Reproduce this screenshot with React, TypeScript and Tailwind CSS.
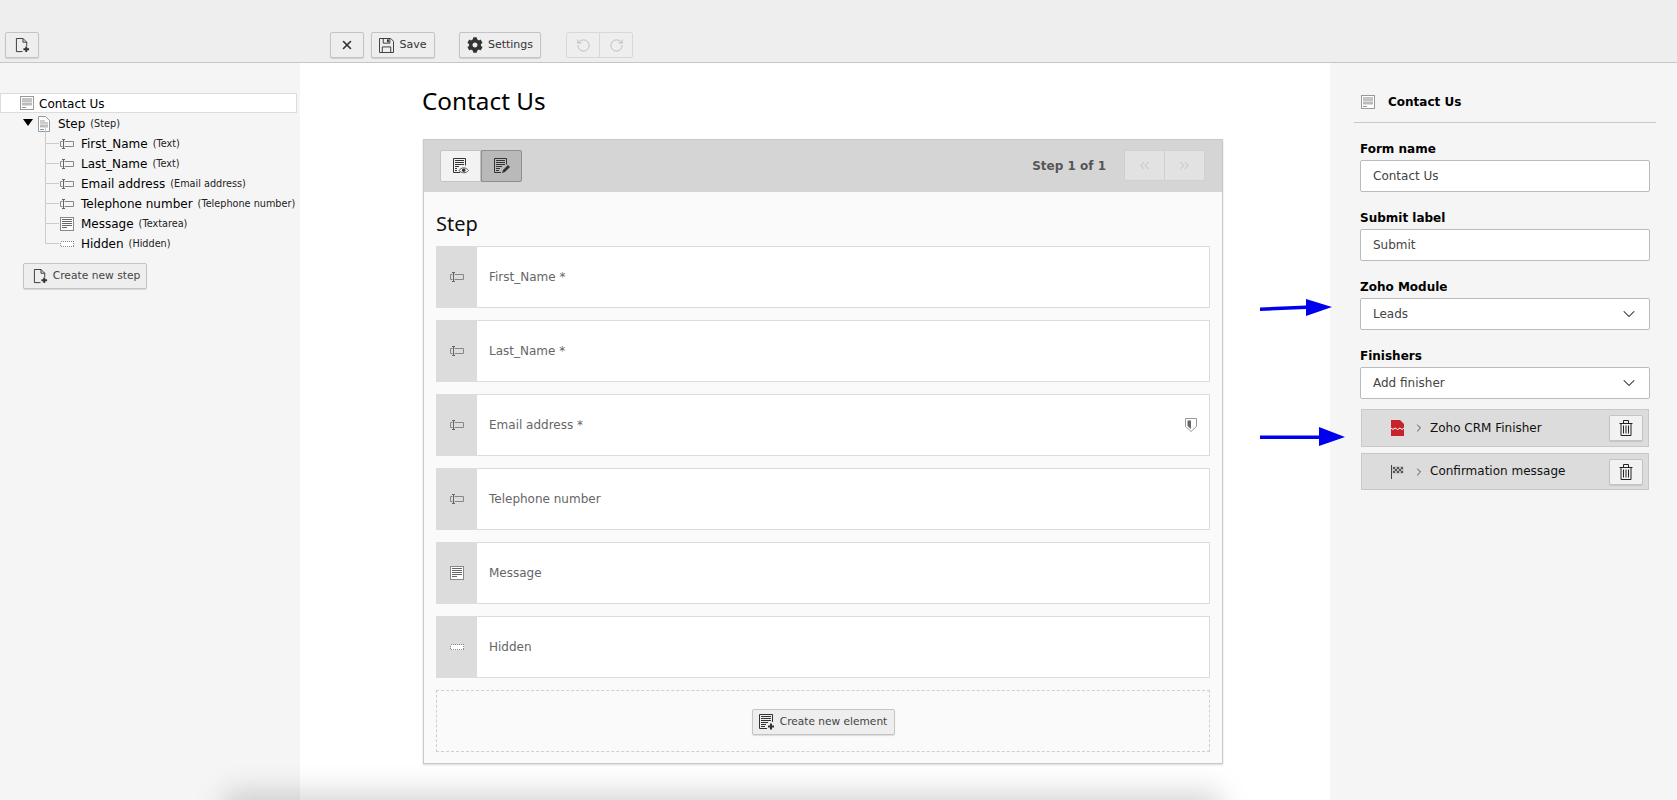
import { ChevronDown, ChevronRight, ChevronsLeft, ChevronsRight, RotateCcw, RotateCw, X } from "lucide-react";
import { FaCog } from "react-icons/fa";
import type { ReactNode } from "react";

const ui = "font-['DejaVu_Sans',sans-serif]";

function PageIcon({ className = "" }: { className?: string }) {
  return (
    <svg viewBox="0 0 14 14" className={className}>
      <rect x="0.5" y="0.5" width="13" height="13" fill="#fff" stroke="#999" />
      <path d="M2 3h10M2 5h10" stroke="#888" />
      <rect x="2" y="6.5" width="10" height="3" fill="#bbb" />
      <path d="M2 11.5h4" stroke="#6a9fd0" />
    </svg>
  );
}

function StepIcon({ className = "" }: { className?: string }) {
  return (
    <svg viewBox="0 0 12 16" className={className}>
      <path d="M.5.5h7l4 4v11H.5z" fill="#fff" stroke="#999" />
      <path d="M2 5h5M2 7h8" stroke="#999" />
      <rect x="2" y="8.5" width="8" height="3" fill="#bbb" />
      <path d="M2 13.5h4" stroke="#6a9fd0" />
    </svg>
  );
}

function TextFieldIcon({ className = "" }: { className?: string }) {
  return (
    <svg viewBox="0 0 14 10" className={className} fill="none" stroke="#888">
      <path d="M4.5 2.5h9v5h-9M2.5 2.5H.5v5h2" />
      <path d="M2 .5h3M3.5.5v9M2 9.5h3" stroke="#666" />
    </svg>
  );
}

function TextareaIcon({ className = "" }: { className?: string }) {
  return (
    <svg viewBox="0 0 14 14" className={className} shapeRendering="crispEdges">
      <rect x="0.5" y="0.5" width="13" height="13" fill="#fff" stroke="#888" />
      <path d="M2 2.5h10M2 4.5h10M2 6.5h10M2 8.5h10M2 10.5h5" stroke="#666" />
    </svg>
  );
}

function HiddenIcon({ className = "" }: { className?: string }) {
  return (
    <svg viewBox="0 0 14 6" className={className} shapeRendering="crispEdges">
      <rect x="0.5" y="0.5" width="13" height="5" fill="#fff" stroke="#888" strokeDasharray="1 1" />
    </svg>
  );
}

function NewPageIcon({ className = "" }: { className?: string }) {
  return (
    <svg viewBox="0 0 16 16" className={className} fill="none" stroke="#333">
      <path d="M8 14.5H1.5v-14h7l4 4v4M8.5.5v4h4" />
      <path d="M12 9v6M9 12h6" strokeWidth="2" />
    </svg>
  );
}

function NewElementIcon({ className = "" }: { className?: string }) {
  return (
    <svg viewBox="0 0 16 16" className={className} fill="none" stroke="#333">
      <path d="M8 14.5H.5V.5h13V8" />
      <path d="M2 2.5h10M2 4.5h10M2 6.5h10M2 8.5h7M2 10.5h5M2 12.5h4" />
      <path d="M12 9.5v6M9 12.5h6" strokeWidth="2" />
    </svg>
  );
}

function SaveIcon() {
  return (
    <svg viewBox="0 0 16 16" className="h-[15px] w-[15px]" fill="none" stroke="#333">
      <path d="M.5.5h12l3 3v12H.5z" />
      <path d="M4.5.5v5h7v-5M3.5 15.5v-6h9v6" />
      <rect x="8.5" y="1.5" width="2" height="3" fill="#333" stroke="none" />
    </svg>
  );
}

function PreviewIcon() {
  return (
    <svg viewBox="0 0 16 16" className="h-4 w-4" fill="none" stroke="#333">
      <path d="M7 14.5H.5V.5h12v7" />
      <path d="M2 2.5h9M2 4.5h9M2 6.5h9M2 8.5h4M2 10.5h2M2 12.5h2" />
      <path d="M6 12.5c2.5-3.5 7-3.5 9.5 0-2.5 3-7 3-9.5 0z" fill="#fff" stroke="#555" />
      <circle cx="10.7" cy="12.3" r="1.8" fill="#333" stroke="none" />
    </svg>
  );
}

function EditIcon() {
  return (
    <svg viewBox="0 0 16 16" className="h-4 w-4" fill="none" stroke="#333">
      <path d="M7 14.5H.5V.5h12v6" />
      <path d="M2 2.5h9M2 4.5h9M2 6.5h9M2 8.5h6M2 10.5h4M2 12.5h3" />
      <path d="M8 15l1-3 5-5 2 2-5 5z" fill="#333" stroke="none" />
    </svg>
  );
}

function ZohoIcon() {
  return (
    <svg viewBox="0 0 13 16" className="h-4 w-[13px]">
      <path d="M0 0h9l4 4v12H0z" fill="#c8222a" />
      <path d="M0 8l2 1.5L4 8l2.5 1.5L9 8l2 1.5L13 8" fill="none" stroke="#fff" strokeWidth="1" />
    </svg>
  );
}

function FlagIcon() {
  return (
    <svg viewBox="0 0 13 14" className="h-[14px] w-[13px]">
      <path d="M.5 0v14" stroke="#444" />
      <path d="M1.5 1.5h11v7h-11z" fill="#bbb" />
      <path d="M2 2h2v2H2zM6 2h2v2H6zM10 2h2v2h-2zM4 4h2v2H4zM8 4h2v2H8zM2 6h2v2H2zM6 6h2v2H6zM10 6h2v2h-2z" fill="#555" />
    </svg>
  );
}

function ShieldIcon() {
  return (
    <svg viewBox="0 0 12 14" className="h-[14px] w-3">
      <path d="M.5.5h11v8l-5.5 5-5.5-5z" fill="#fff" stroke="#999" />
      <path d="M2.5 2.5H6V11L2.5 8z" fill="#666" />
    </svg>
  );
}

function TrashIcon() {
  return (
    <svg viewBox="0 0 14 16" className="h-4 w-[14px]" fill="none" stroke="#222">
      <path d="M.5 3.5h13M4.5 3.5v-3h5v3M2 3.5v12h10v-12" />
      <path d="M4.5 5.5v8M7 5.5v8M9.5 5.5v8" />
    </svg>
  );
}

function ToolButton({ children, className = "" }: { children: ReactNode; className?: string }) {
  return (
    <button className={`flex h-[26px] items-center justify-center gap-[5px] rounded-[2px] border border-[#c4c4c4] bg-[#eeeeee] text-[11px] text-[#333] shadow-[0_1px_1px_rgba(0,0,0,0.12)] ${className}`}>
      {children}
    </button>
  );
}

function TreeRow({ icon, label, type }: { icon: ReactNode; label: string; type: string }) {
  return (
    <div className="relative flex h-5 items-center pl-[60px]">
      <span className="absolute bottom-[10px] left-[45px] h-5 w-[14px] border-b border-l border-[#ccc]" />
      <span className="flex w-[21px] items-center">{icon}</span>
      <span className="whitespace-nowrap text-[12px] text-black">{label}</span>
      <span className="ml-[5px] whitespace-nowrap text-[9.7px] text-[#222]">({type})</span>
    </div>
  );
}

function FormRow({ icon, label, extra }: { icon: ReactNode; label: string; extra?: ReactNode }) {
  return (
    <div className="flex h-[62px] border border-[#dcdcdc] bg-white">
      <div className="flex w-[40px] items-center justify-center bg-[#dcdcdc]">{icon}</div>
      <div className="flex flex-1 items-center justify-between pl-[12px] pr-[12px] text-[12px] text-[#666]">
        <span>{label}</span>
        {extra}
      </div>
    </div>
  );
}

function Field({ label, value, select, className = "" }: { label: string; value: string; select?: boolean; className?: string }) {
  return (
    <div className={className}>
      <div className="flex h-[19px] items-center pb-[1px] text-[12px] font-bold text-black">{label}</div>
      <div className="mt-[1px] flex h-[32px] items-center justify-between rounded-[2px] border border-[#bbb] bg-white pl-[12px] pr-[10px] text-[12px] text-[#444]">
        <span>{value}</span>
        {select && <ChevronDown size={20} strokeWidth={1.25} className="text-[#222]" />}
      </div>
    </div>
  );
}

function Finisher({ icon, label, className = "" }: { icon: ReactNode; label: string; className?: string }) {
  return (
    <div className={`flex items-center border border-[#c8c8c8] bg-[#dcdcdc] pl-[29px] pr-[5px] ${className}`}>
      <span className="flex w-[24px] items-center">{icon}</span>
      <ChevronRight size={12} strokeWidth={1.5} className="-ml-[2px] text-[#222]" />
      <span className="ml-[5px] flex-1 pb-[1px] text-[12px] text-[#111]">{label}</span>
      <button className="flex h-[26px] w-[34px] items-center justify-center rounded-[2px] border border-[#c4c4c4] bg-[#f2f2f2] shadow-[0_1px_1px_rgba(0,0,0,0.1)]">
        <TrashIcon />
      </button>
    </div>
  );
}

export default function App() {
  return (
    <div className={`relative flex h-[800px] w-[1677px] flex-col overflow-hidden bg-white ${ui}`}>
      {/* toolbar */}
      <header className="flex h-[63px] flex-none items-end border-b border-[#c6c6c6] bg-[#eeeeee] pb-[4px]">
        <ToolButton className="ml-[5px] w-[34px]"><NewPageIcon className="h-[15px] w-[15px]" /></ToolButton>
        <ToolButton className="ml-[291px] w-[34px]"><X size={14} strokeWidth={2.75} /></ToolButton>
        <ToolButton className="ml-[7px] w-[64px]"><SaveIcon /><span>Save</span></ToolButton>
        <ToolButton className="ml-[24px] w-[82px]"><FaCog size={16} className="text-[#333]" /><span>Settings</span></ToolButton>
        <div className="ml-[25px] flex opacity-50">
          <ToolButton className="w-[34px] rounded-r-none shadow-none"><RotateCcw size={15} strokeWidth={1.25} className="text-[#777]" /></ToolButton>
          <ToolButton className="-ml-px w-[34px] rounded-l-none shadow-none"><RotateCw size={15} strokeWidth={1.25} className="text-[#777]" /></ToolButton>
        </div>
      </header>

      <div className="flex min-h-0 flex-1">
        {/* form tree */}
        <aside className="w-[300px] flex-none bg-[#f5f5f5] pt-[30px]">
          <div className="relative flex h-5 w-[297px] items-center border border-[#dcdcdc] bg-white pl-[19px] text-[12px] text-black">
            <PageIcon className="h-[14px] w-[14px]" />
            <span className="ml-[5px] pt-[2px]">Contact Us</span>
          </div>
          <div className="relative mt-[1px] flex h-5 items-center pl-[38px]">
            <span className="absolute left-[23px] top-[5px] h-0 w-0 border-x-[5px] border-t-[7px] border-x-transparent border-t-black" />
            <StepIcon className="h-4 w-3" />
            <span className="ml-[8px] text-[12px] text-black">Step</span>
            <span className="ml-[5px] text-[9.7px] text-[#222]">(Step)</span>
          </div>
          <TreeRow icon={<TextFieldIcon className="h-[10px] w-[14px]" />} label="First_Name" type="Text" />
          <TreeRow icon={<TextFieldIcon className="h-[10px] w-[14px]" />} label="Last_Name" type="Text" />
          <TreeRow icon={<TextFieldIcon className="h-[10px] w-[14px]" />} label="Email address" type="Email address" />
          <TreeRow icon={<TextFieldIcon className="h-[10px] w-[14px]" />} label="Telephone number" type="Telephone number" />
          <TreeRow icon={<TextareaIcon className="h-[14px] w-[14px]" />} label="Message" type="Textarea" />
          <TreeRow icon={<HiddenIcon className="h-[6px] w-[14px]" />} label="Hidden" type="Hidden" />
          <button className="ml-[23px] mt-[9px] flex h-[26px] w-[124px] items-center justify-center gap-[5px] rounded-[2px] border border-[#c4c4c4] bg-[#eeeeee] pl-[3px] text-[10.7px] text-[#444] shadow-[0_1px_1px_rgba(0,0,0,0.12)]">
            <NewPageIcon className="h-[15px] w-[15px]" />
            <span>Create new step</span>
          </button>
        </aside>

        {/* stage */}
        <main className="w-[1030px] flex-none pl-[123px]">
          <h1 className="-ml-px mt-[24px] text-[24.3px] leading-[28px] text-black font-['Noto_Sans',sans-serif]">Contact Us</h1>
          <section className="mt-[24px] h-[625px] w-[800px] border border-[#c8c8c8] bg-[#fafafa] shadow-[0_1px_2px_rgba(0,0,0,0.15)]">
            <div className="flex h-[52px] items-center justify-between bg-[#d5d5d5] pb-[1px] pl-[16px] pr-[17px]">
              <div className="flex">
                <button className="flex h-[32px] w-[41px] items-center justify-center rounded-l-[2px] border border-[#c4c4c4] bg-[#f2f2f2]"><PreviewIcon /></button>
                <button className="flex h-[32px] w-[41px] items-center justify-center rounded-r-[2px] border border-[#8f8f8f] bg-[#b9b9b9]"><EditIcon /></button>
              </div>
              <div className="flex items-center">
                <span className="mr-[18px] text-[12px] font-bold text-[#555]">Step 1 of 1</span>
                <div className="flex">
                  <span className="flex h-[31px] w-[41px] items-center justify-center rounded-l-[2px] border border-[#d0d0d0] bg-[#e2e2e2]"><ChevronsLeft size={15} strokeWidth={1} className="text-[#aaa]" /></span>
                  <span className="-ml-px flex h-[31px] w-[41px] items-center justify-center rounded-r-[2px] border border-[#d0d0d0] bg-[#e2e2e2]"><ChevronsRight size={15} strokeWidth={1} className="text-[#aaa]" /></span>
                </div>
              </div>
            </div>
            <div className="pl-[12px] pr-[12px]">
              <h2 className="flex h-[54px] items-center pt-[9px] text-[20px] text-[#111] font-['Noto_Sans',sans-serif]">Step</h2>
              <div className="flex flex-col gap-[12px]">
                <FormRow icon={<TextFieldIcon className="h-[10px] w-[14px]" />} label="First_Name *" />
                <FormRow icon={<TextFieldIcon className="h-[10px] w-[14px]" />} label="Last_Name *" />
                <FormRow icon={<TextFieldIcon className="h-[10px] w-[14px]" />} label="Email address *" extra={<ShieldIcon />} />
                <FormRow icon={<TextFieldIcon className="h-[10px] w-[14px]" />} label="Telephone number" />
                <FormRow icon={<TextareaIcon className="h-[14px] w-[14px]" />} label="Message" />
                <FormRow icon={<HiddenIcon className="h-[6px] w-[14px]" />} label="Hidden" />
              </div>
              <div className="mt-[12px] flex h-[62px] items-center justify-center border border-dashed border-[#cfcfcf] pt-[2px]">
                <button className="flex h-[26px] w-[143px] items-center justify-center gap-[5px] rounded-[2px] border border-[#c4c4c4] bg-[#eeeeee] text-[10.6px] text-[#444] shadow-[0_1px_1px_rgba(0,0,0,0.12)]">
                  <NewElementIcon className="h-4 w-4" />
                  <span>Create new element</span>
                </button>
              </div>
            </div>
          </section>
        </main>

        {/* inspector */}
        <aside className="flex-1 bg-[#f5f5f5] pl-[24px] pr-[21px]">
          <div className="flex h-[60px] items-center border-b border-[#c8c8c8] pl-[7px] pt-[19px]">
            <PageIcon className="h-[14px] w-[14px]" />
            <span className="ml-[13px] text-[12px] font-bold text-black">Contact Us</span>
          </div>
          <div className="pl-[6px] pr-[6px]">
            <Field label="Form name" value="Contact Us" className="mt-[17px]" />
            <Field label="Submit label" value="Submit" className="mt-[17px]" />
            <Field label="Zoho Module" value="Leads" select className="mt-[17px]" />
            <Field label="Finishers" value="Add finisher" select className="mt-[17px]" />
            <Finisher icon={<ZohoIcon />} label="Zoho CRM Finisher" className="ml-[1px] mr-[1px] mt-[10px] h-[38px]" />
            <Finisher icon={<FlagIcon />} label="Confirmation message" className="ml-[1px] mr-[1px] mt-[6px] h-[37px]" />
          </div>
        </aside>
      </div>

      {/* annotation arrows drawn over the screenshot */}
      <svg className="pointer-events-none absolute left-[1260px] top-[296px] h-[160px] w-[90px]" viewBox="0 0 90 160">
        <path d="M0 11.5L46 9.5V3L72 11 46 20V13L0 15z" fill="#0000ee" />
        <path d="M0 139.5H59V131L85 141 59 150V143H0z" fill="#0000ee" />
      </svg>

      {/* blurred shadow along the bottom edge */}
      <div className="pointer-events-none absolute left-[225px] top-[792px] h-[40px] w-[995px] bg-black/[.16] blur-[14px]" />
    </div>
  );
}
